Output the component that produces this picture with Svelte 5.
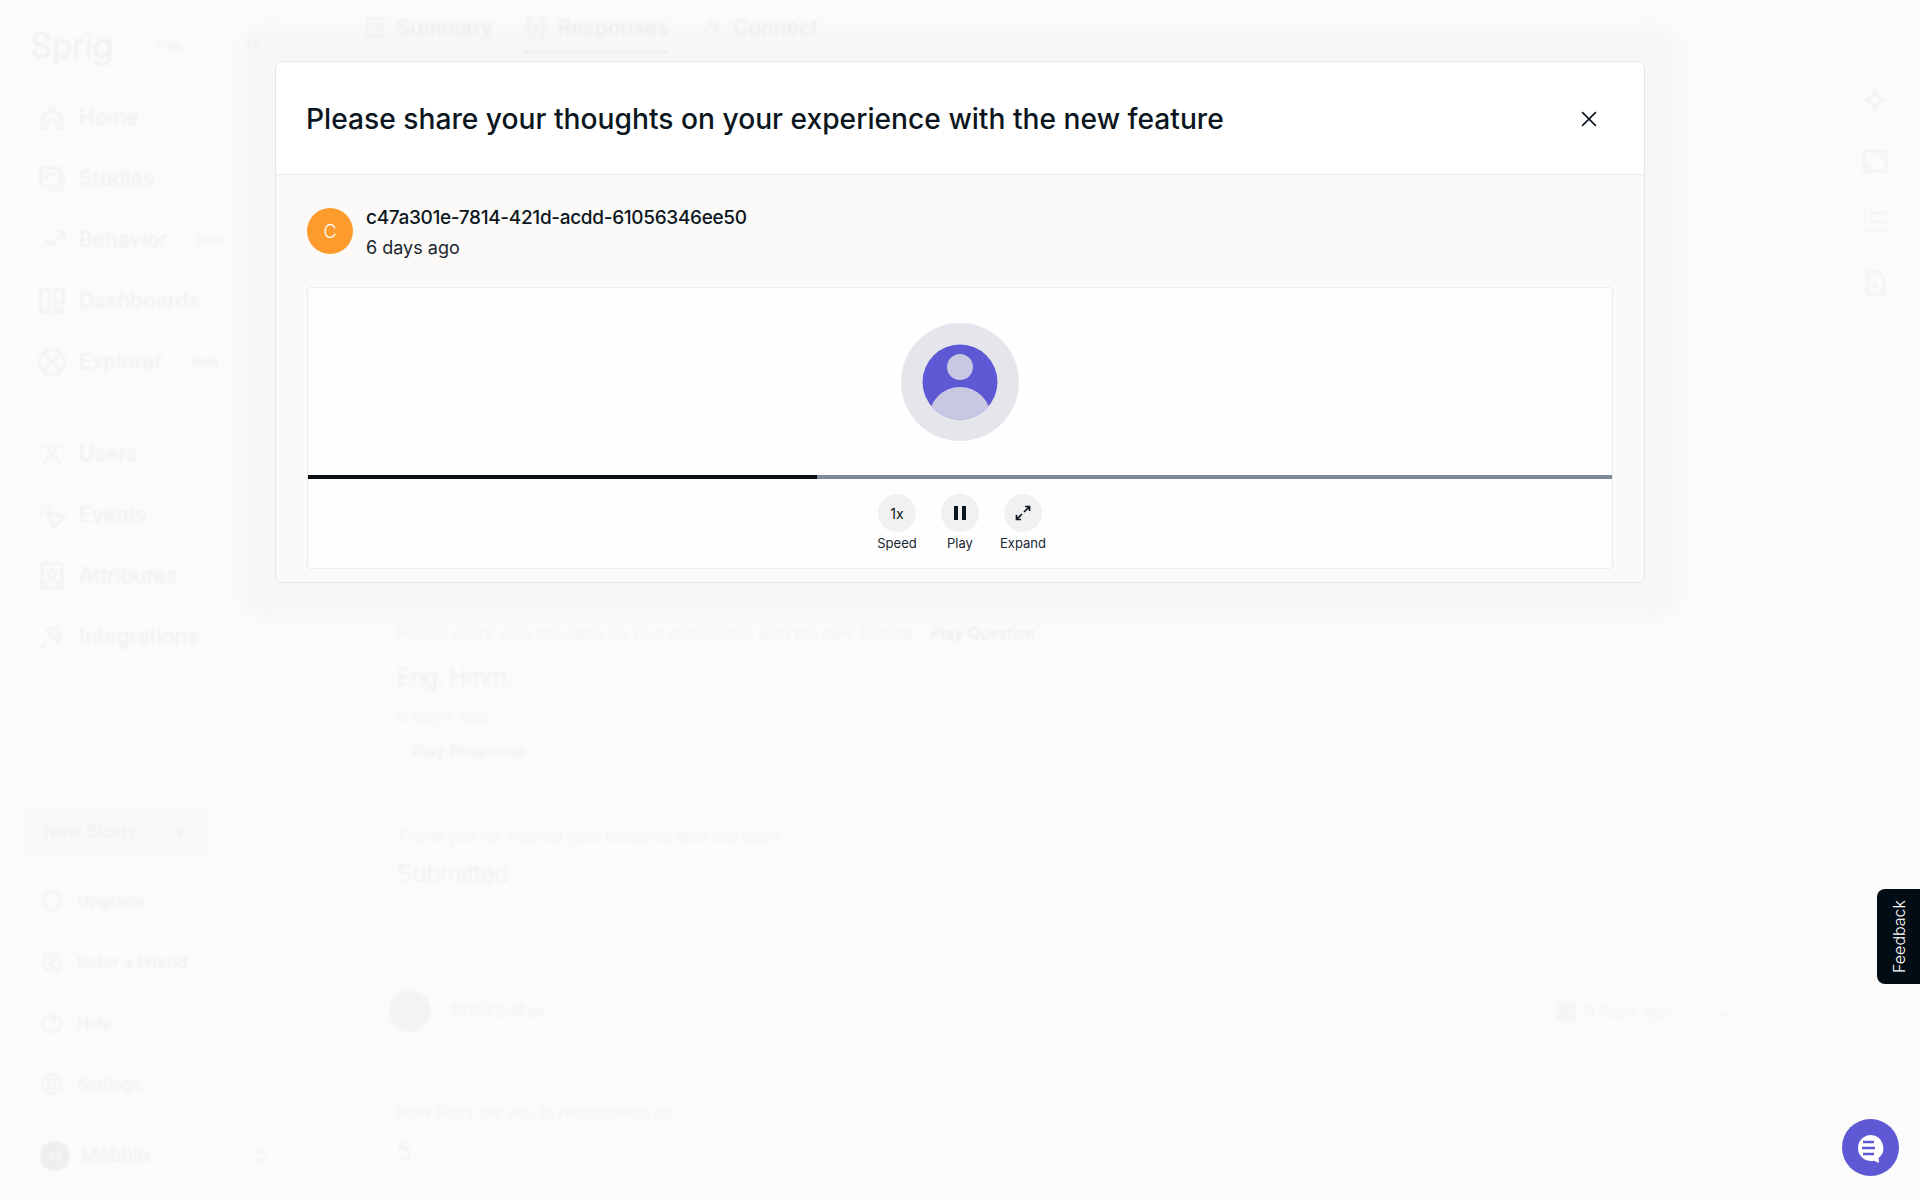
<script>
  const mainNav = [
    { label: 'Home', icon: 'M4 20v-8l8-8 8 8v8h-4v-3a4 4 0 0 0-8 0v3z' },
    { label: 'Studies', icon: 'M5 3h11a2 2 0 0 1 2 2v11a2 2 0 0 1-2 2H5a2 2 0 0 1-2-2V5a2 2 0 0 1 2-2zM6 8h9M6 11h4M21 7v11a3 3 0 0 1-3 3H8' },
    { label: 'Behavior', badge: 'Beta', icon: 'M2 20l7-7 3 3 9-10M15 5h7v7' },
    { label: 'Dashboards', icon: 'M3 3h7v18H3zM14 3h7v11h-7zM14 18h7v3h-7z' },
    { label: 'Explorer', badge: 'Beta', icon: 'M12 2a10 10 0 1 1 0 20 10 10 0 0 1 0-20zM5 5l14 14M19 5L5 19' }
  ];
  const dataNav = [
    { label: 'Users', icon: 'M9 9a3 3 0 1 1 6 0 3 3 0 0 1-6 0zM6 21c0-5 3-7 6-7s6 2 6 7M3 7c1-3 4-3 5-2M21 7c-1-3-4-3-5-2' },
    { label: 'Events', icon: 'M8 10l14 3-8 9zM2 11h3M5 4l2 3M11 2v4' },
    { label: 'Attributes', icon: 'M6 2h12a2 2 0 0 1 2 2v16a2 2 0 0 1-2 2H6a2 2 0 0 1-2-2V4a2 2 0 0 1 2-2zM9 10a3 3 0 1 1 6 0 3 3 0 0 1-6 0zM7 19c0-6 10-6 10 0' },
    { label: 'Integrations', icon: 'M8 7a6 6 0 1 1 8 9zM8 16l-6 6M16 4l2-2M20 9l3-1' }
  ];
  const bottomNav = [
    { label: 'Upgrade', icon: 'M12 3a9 9 0 1 1 0 18 9 9 0 0 1 0-18z' },
    { label: 'Refer a Friend', icon: 'M12 3a9 9 0 1 1 0 18 9 9 0 0 1 0-18zM9 9c1-2 6-2 6 0s-6 4-6 6c1 2 6 2 6 0' },
    { label: 'Help', icon: 'M12 3a9 9 0 1 1 0 18 9 9 0 0 1 0-18zM9 9a3 3 0 1 1 4 3l-1 2M12 17v1' },
    { label: 'Settings', icon: 'M12 2l9 5v10l-9 5-9-5V7zM12 8a4 4 0 1 1 0 8 4 4 0 0 1 0-8z' }
  ];
  const tabs = [
    { label: 'Summary', icon: 'M5 4h14v16H5zM8 9h8M8 13h8' },
    { label: 'Responses', active: true, icon: 'M5 3h14v18H5zM8 9h8M8 13h8' },
    { label: 'Connect', icon: 'M9 8a5 5 0 1 1 7 7zM9 15l-5 5' }
  ];
  const sideIcons = [
    'M12 3c1 6 3 8 8 9-5 1-7 3-8 9-1-6-3-8-8-9 5-1 7-3 8-9z',
    'M3 4h18v16H3zM15 7h3v3M9 17H6v-3',
    'M8 5h13M8 12h13M8 19h13M3 5h1M3 12h1M3 19h1',
    'M6 3h8l5 5v13H6zM12 12v5'
  ];
</script>

<div class="shell">
  <aside class="sidebar">
    <div class="brand">
      <span class="logo">Sprig</span>
      <span class="plan">Free</span>
      <svg class="collapse" viewBox="0 0 24 24"><path d="M4 4v16M20 12H8M13 7l-5 5 5 5" /></svg>
    </div>
    <nav class="nav">
      {#each mainNav as item}
        <div class="nav-item">
          <svg viewBox="0 0 24 24"><path d={item.icon} /></svg>
          <span>{item.label}</span>
          {#if item.badge}<small>{item.badge}</small>{/if}
        </div>
      {/each}
    </nav>
    <nav class="nav second">
      {#each dataNav as item}
        <div class="nav-item">
          <svg viewBox="0 0 24 24"><path d={item.icon} /></svg>
          <span>{item.label}</span>
        </div>
      {/each}
    </nav>
    <div class="new-study"><span>New Study</span><b>+</b></div>
    <nav class="nav lower">
      {#each bottomNav as item}
        <div class="nav-item small">
          <svg viewBox="0 0 24 24"><path d={item.icon} /></svg>
          <span>{item.label}</span>
        </div>
      {/each}
    </nav>
    <div class="account">
      <i>AS</i>
      <span>Mobbin</span>
      <svg viewBox="0 0 24 24"><path d="M8 9l4-4 4 4M8 15l4 4 4-4" /></svg>
    </div>
  </aside>

  <main class="content">
    <div class="tabs">
      {#each tabs as tab}
        <div class="tab" class:active={tab.active}>
          <svg viewBox="0 0 24 24"><path d={tab.icon} /></svg>
          <span>{tab.label}</span>
        </div>
      {/each}
    </div>
    <section class="answers">
      <p class="question">Please share your thoughts on your experience with the new feature <em>Play Question</em></p>
      <p class="answer tight">Eng. Hmm.</p>
      <p class="tiny">6 days ago</p>
      <p class="play">Play Response</p>
      <p class="question next">Thank you for sharing your thoughts with our team</p>
      <p class="answer follow">Submitted</p>
      <div class="responder">
        <i></i>
        <span>9f1c72d4ae</span>
        <u></u>
        <em>6 days ago</em>
        <b>...</b>
      </div>
      <p class="question last">How likely are you to recommend us</p>
      <p class="answer score">5</p>
    </section>
  </main>

  <div class="side-icons">
    {#each sideIcons as d}
      <svg viewBox="0 0 24 24"><path {d} /></svg>
    {/each}
  </div>
</div>

<div class="modal" role="dialog">
  <header class="modal-head">
    <h2>Please share your thoughts on your experience with the new feature</h2>
    <svg class="close" viewBox="0 0 16 16"><path d="M2.5 2.5l11 11M13.5 2.5l-11 11" /></svg>
  </header>
  <div class="modal-body">
    <div class="person">
      <span class="avatar">C</span>
      <div class="person-text">
        <div class="uuid">c47a301e-7814-421d-acdd-61056346ee50</div>
        <div class="when">6 days ago</div>
      </div>
    </div>
    <div class="player">
      <div class="stage">
        <svg class="portrait" viewBox="0 0 118 118">
          <circle cx="59" cy="59" r="59" fill="#e5e5ec" />
          <circle cx="59" cy="59" r="37.5" fill="#5f58d4" />
          <clipPath id="disc"><circle cx="59" cy="59" r="37.5" /></clipPath>
          <circle cx="59" cy="44" r="13" fill="#c9c8e2" />
          <circle cx="59" cy="95" r="31" fill="#c9c8e2" clip-path="url(#disc)" />
        </svg>
      </div>
      <div class="track"><div class="done" style="width: 39%"></div></div>
      <div class="controls">
        <div class="control">
          <span class="round">1x</span>
          <span class="caption">Speed</span>
        </div>
        <div class="control">
          <span class="round"><span class="pause"></span></span>
          <span class="caption">Play</span>
        </div>
        <div class="control">
          <span class="round">
            <svg viewBox="0 0 16 16"><path d="M9 7l5.5-5.5M10 1.5h4.5V6M7 9l-5.5 5.5M1.5 10v4.5H6" /></svg>
          </span>
          <span class="caption">Expand</span>
        </div>
      </div>
    </div>
  </div>
</div>

<div class="feedback"><span>Feedback</span></div>
<div class="chat">
  <svg viewBox="0 0 32 32">
    <path class="bubble" d="M16 3a13 13 0 1 0 0 26c1 0 2-.1 3-.3L24 31l-.4-5A13 13 0 0 0 16 3z" />
    <path class="lines" d="M8 10h11M7 16h13M8 22h11" />
  </svg>
</div>

<style>
  :global(body) {
    margin: 0;
    background: #fbfbfb;
    font-family: Inter, "Liberation Sans", sans-serif;
    overflow: hidden;
  }

  .shell {
    display: flex;
    height: 1200px;
    filter: blur(1px);
    color: #f0f0f1;
  }

  .shell svg {
    fill: none;
    stroke: #f0f0f1;
    stroke-width: 1.6;
  }

  .sidebar {
    width: 340px;
    flex: none;
    display: flex;
    flex-direction: column;
  }

  .brand {
    height: 87px;
    display: flex;
    align-items: center;
    padding-left: 30px;
    box-sizing: border-box;
    padding-top: 3px;
  }

  .logo {
    font-size: 35px;
    width: 126px;
    letter-spacing: -1px;
  }

  .plan {
    font-size: 13px;
    width: 90px;
  }

  .collapse {
    width: 20px;
    height: 20px;
  }

  .nav {
    display: flex;
    flex-direction: column;
  }

  .second {
    margin-top: 31px;
  }

  .nav-item {
    height: 61px;
    display: flex;
    align-items: center;
    padding-left: 37px;
    gap: 12px;
    font-size: 21px;
    font-weight: 500;
  }

  .nav-item svg {
    width: 30px;
    height: 30px;
  }

  .nav-item small {
    font-size: 12px;
    margin-left: 18px;
  }

  .nav-item.small {
    font-size: 16.5px;
    gap: 13px;
    padding-left: 40px;
  }

  .nav-item.small svg {
    width: 24px;
    height: 24px;
  }

  .new-study {
    width: 190px;
    height: 50px;
    margin: 139px 0 14px 21px;
    padding: 0 22px;
    box-sizing: border-box;
    display: flex;
    align-items: center;
    justify-content: space-between;
    background: #f9f9fa;
    border-radius: 8px;
    font-size: 18px;
    font-weight: 500;
    color: #f0f0f2;
  }

  .new-study b {
    font-weight: 400;
    font-size: 24px;
  }

  .account {
    margin-top: 11px;
    height: 61px;
    display: flex;
    align-items: center;
    padding-left: 40px;
    font-size: 19px;
    font-weight: 500;
  }

  .account i {
    width: 30px;
    height: 30px;
    border-radius: 50%;
    background: #eeeeef;
    color: #f9f9f9;
    font-size: 11px;
    font-style: normal;
    display: flex;
    align-items: center;
    justify-content: center;
    margin-right: 11px;
  }

  .account span {
    width: 171px;
  }

  .account svg {
    width: 20px;
    height: 20px;
  }

  .content {
    flex: 1;
  }

  .tabs {
    display: flex;
    height: 50px;
    padding: 3px 0 0 22px;
    gap: 30px;
    color: #eeeef0;
  }

  .tab {
    display: flex;
    align-items: center;
    gap: 9px;
    font-size: 21px;
    font-weight: 500;
    border-bottom: 2px solid transparent;
  }

  .tab.active {
    border-bottom-color: #ececee;
  }

  .tab svg {
    width: 26px;
    height: 26px;
  }

  .answers {
    padding: 570px 90px 0 57px;
    font-size: 16px;
    color: #f3f3f4;
  }

  .answers p {
    margin: 0;
  }

  .question {
    line-height: 20px;
  }

  .question em {
    font-style: normal;
    margin-left: 14px;
    color: #ebebec;
  }

  .answers .answer {
    font-size: 24px;
    line-height: 30px;
    margin-top: 20px;
    font-weight: 300;
    color: #efeff0;
  }

  .tight {
    letter-spacing: -0.9px;
  }

  .answers .tiny {
    font-size: 16px;
    line-height: 16px;
    letter-spacing: 1px;
    margin-top: 15px;
  }

  .answers .play {
    font-size: 16.5px;
    line-height: 18px;
    margin: 18px 0 0 15px;
    color: #efeff0;
  }

  .answers .next {
    margin-top: 66px;
  }

  .answers .follow {
    margin-top: 13px;
  }

  .responder {
    display: flex;
    align-items: center;
    margin: 101px 0 0 -8px;
    font-size: 17px;
  }

  .responder i {
    width: 42px;
    height: 42px;
    border-radius: 50%;
    background: #f3f3f4;
    margin-right: 20px;
  }

  .responder span {
    flex: 1;
  }

  .responder u {
    width: 20px;
    height: 20px;
    background: #f5f5f6;
    margin-right: 8px;
  }

  .responder em {
    font-style: normal;
    margin-right: 40px;
  }

  .answers .last {
    margin-top: 70px;
  }

  .answers .score {
    margin-top: 14px;
  }

  .side-icons {
    width: 100px;
    flex: none;
    box-sizing: border-box;
    padding: 85px 0 0 10px;
    display: flex;
    flex-direction: column;
    align-items: center;
    gap: 31px;
  }

  .side-icons svg {
    width: 30px;
    height: 30px;
  }

  /* dialog sits over the dimmed page */
  .modal {
    position: absolute;
    left: 275px;
    top: 61px;
    width: 1370px;
    box-sizing: border-box;
    border: 1px solid #e6e6ea;
    border-radius: 8px;
    background: #fff;
    box-shadow: 0 0 14px 36px rgba(225, 229, 240, 0.17);
    overflow: hidden;
  }

  .modal-head {
    height: 113px;
    box-sizing: border-box;
    padding: 2px 14px 0 30px;
    display: flex;
    align-items: center;
    justify-content: space-between;
    border-bottom: 1px solid #e8e8ec;
    background: #fff;
  }

  h2 {
    margin: 0;
    font-size: 28.2px;
    font-weight: 500;
    color: #0c1620;
  }

  .close {
    width: 20px;
    height: 20px;
    margin-right: 31px;
    fill: none;
    stroke: #0c1620;
    stroke-width: 1.3;
  }

  .modal-body {
    background: #fbfaf8;
    padding: 25px 31px 13px;
  }

  .person {
    display: flex;
    align-items: center;
    gap: 13px;
    height: 62px;
  }

  .avatar {
    width: 46px;
    height: 46px;
    border-radius: 50%;
    background: #fd9c2d;
    color: #fff;
    font-size: 18px;
    font-weight: 300;
    display: flex;
    align-items: center;
    justify-content: center;
  }

  .person-text {
    padding-top: 3px;
  }

  .uuid {
    font-size: 19px;
    font-weight: 500;
    letter-spacing: -0.33px;
    line-height: 31px;
    color: #0c1620;
  }

  .when {
    font-size: 18px;
    line-height: 30px;
    color: #1a2630;
  }

  .player {
    margin-top: 25px;
    border: 1px solid #ebebee;
    border-radius: 4px;
    background: #fefefe;
  }

  .stage {
    height: 187px;
    display: flex;
    justify-content: center;
    padding-top: 35px;
    box-sizing: border-box;
  }

  .portrait {
    width: 118px;
    height: 118px;
  }

  .track {
    height: 4px;
    background: #7f8a99;
  }

  .done {
    height: 100%;
    background: #0a0f14;
  }

  .controls {
    display: flex;
    justify-content: center;
    gap: 17px;
    padding: 15px 0 16px;
  }

  .control {
    width: 46px;
    display: flex;
    flex-direction: column;
    align-items: center;
    gap: 2px;
    white-space: nowrap;
  }

  .round {
    width: 38px;
    height: 38px;
    border-radius: 50%;
    background: #f1f1f2;
    display: flex;
    align-items: center;
    justify-content: center;
    font-size: 14px;
    color: #0c1620;
  }

  .round svg {
    width: 16px;
    height: 16px;
    fill: none;
    stroke: #0c1620;
    stroke-width: 1.7;
  }

  .pause {
    width: 3.5px;
    height: 14px;
    border-left: 4px solid #0c1620;
    border-right: 4px solid #0c1620;
  }

  .caption {
    font-size: 13px;
    line-height: 18px;
    color: #1a2630;
  }

  .feedback {
    position: fixed;
    right: 0;
    top: 889px;
    width: 43px;
    height: 95px;
    background: #020c14;
    border-radius: 8px 0 0 8px;
    display: flex;
    align-items: center;
    justify-content: center;
  }

  .feedback span {
    writing-mode: vertical-rl;
    transform: rotate(180deg);
    color: #fff;
    font-size: 16px;
    font-weight: 300;
  }

  .chat {
    position: fixed;
    left: 1842px;
    top: 1119px;
    width: 57px;
    height: 57px;
    border-radius: 50%;
    background: #5f58d4;
    display: flex;
    align-items: center;
    justify-content: center;
  }

  .chat svg {
    width: 32px;
    height: 32px;
  }

  .bubble {
    fill: #fff;
  }

  .lines {
    fill: none;
    stroke: #5f58d4;
    stroke-width: 2.6;
  }
</style>
